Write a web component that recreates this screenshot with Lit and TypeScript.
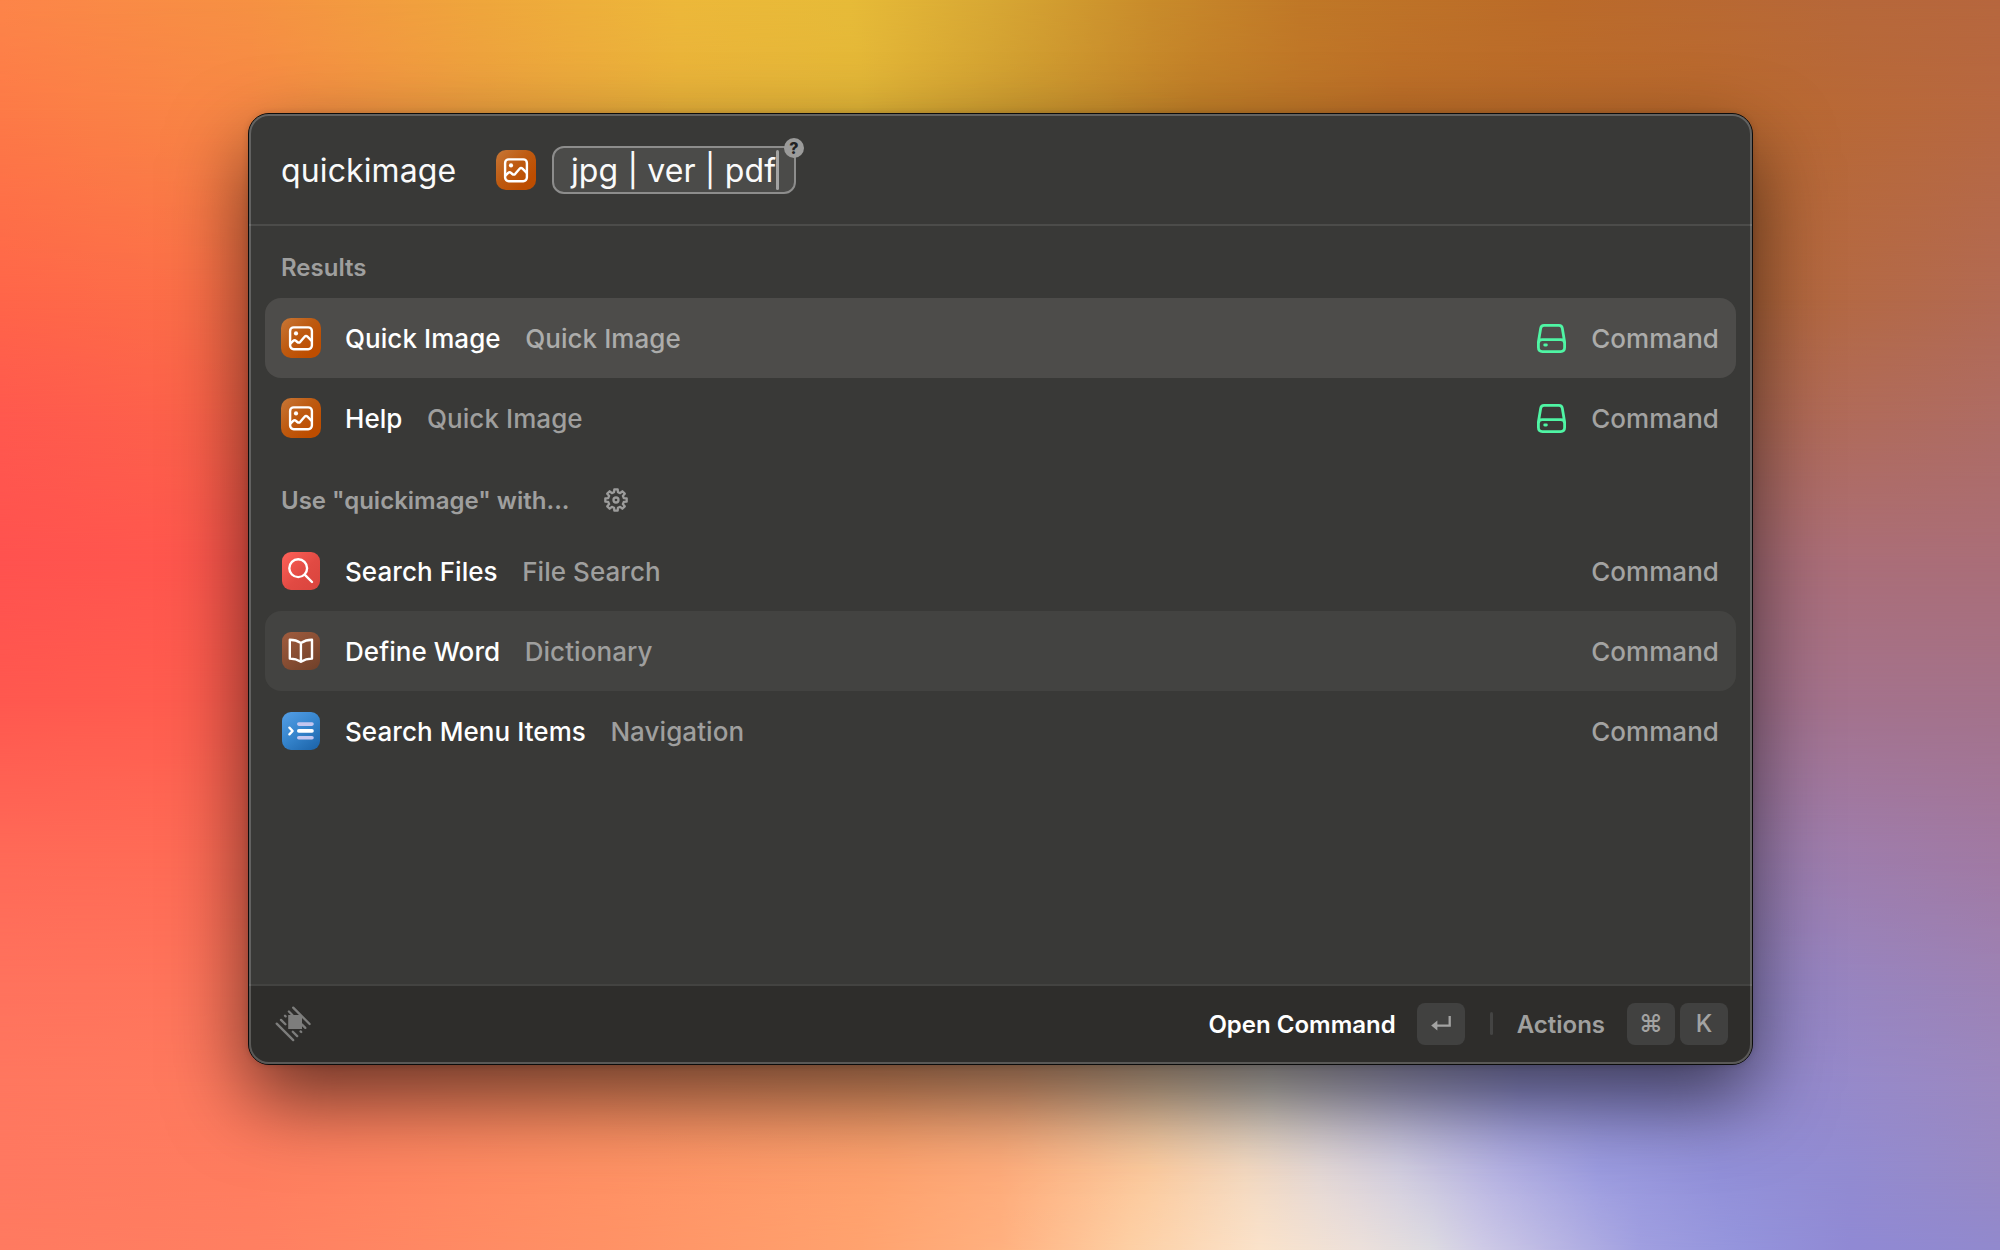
import { LitElement, html, svg, css } from "lit";
import { customElement } from "lit/decorators.js";
import { classMap } from "lit/directives/class-map.js";
import { styleMap } from "lit/directives/style-map.js";

type IconName = "image" | "search" | "book" | "menu";

interface Row {
  icon: IconName;
  title: string;
  subtitle: string;
  local?: boolean;
  state?: "selected" | "hover";
}

const results: Row[] = [
  { icon: "image", title: "Quick Image", subtitle: "Quick Image", local: true, state: "selected" },
  { icon: "image", title: "Help", subtitle: "Quick Image", local: true },
];

const fallbacks: Row[] = [
  { icon: "search", title: "Search Files", subtitle: "File Search" },
  { icon: "book", title: "Define Word", subtitle: "Dictionary", state: "hover" },
  { icon: "menu", title: "Search Menu Items", subtitle: "Navigation" },
];

/* Wallpaper: each band is a horizontal gradient that fades into the next one down. */
const bands: { y: number; stops: [string, number][] }[] = [
  { y: 0, stops: [["#fd8549", 0], ["#f69143", 250], ["#efa63c", 480], ["#edb83a", 680], ["#e7bb38", 850], ["#d8a834", 990], ["#c98c2b", 1150], ["#c07827", 1300], ["#bb6b29", 1550], ["#b7683a", 1850], ["#b7673e", 2000]] },
  { y: 110, stops: [["#fd7a47", 0], ["#f88945", 250], ["#eda03f", 480], ["#e9b23a", 680], ["#e3b638", 860], ["#cf9c30", 1020], ["#c27f28", 1200], ["#bd6e28", 1400], ["#ba692d", 1700], ["#b76841", 2000]] },
  { y: 300, stops: [["#ff6549", 0], ["#fb7148", 250], ["#c08040", 1000], ["#b5683b", 1750], ["#b26a53", 2000]] },
  { y: 420, stops: [["#ff584e", 0], ["#fc6549", 250], ["#b07040", 1000], ["#b26a54", 1750], ["#ae6c64", 2000]] },
  { y: 560, stops: [["#ff524f", 0], ["#ff594d", 250], ["#b07060", 1000], ["#ab6e78", 1750], ["#aa6e78", 2000]] },
  { y: 700, stops: [["#ff584f", 0], ["#ff5f4f", 250], ["#b07060", 1000], ["#a4728d", 1750], ["#a4728a", 2000]] },
  { y: 850, stops: [["#ff6957", 0], ["#ff6c55", 250], ["#c08070", 1000], ["#9d7eb0", 1750], ["#a179a2", 2000]] },
  { y: 980, stops: [["#ff725d", 0], ["#ff755a", 250], ["#f0946a", 800], ["#dcb090", 1080], ["#c6bcc0", 1250], ["#9c99d2", 1450], ["#9486c6", 1750], ["#9d82b4", 2000]] },
  { y: 1090, stops: [["#ff775f", 0], ["#ff7b5e", 250], ["#ff9163", 600], ["#f9a06c", 880], ["#f5ac7e", 1020], ["#e6c5a4", 1160], ["#d2ccc6", 1270], ["#b3b0d6", 1400], ["#9897db", 1520], ["#928fd8", 1640], ["#948ace", 1800], ["#9b88c0", 2000]] },
  { y: 1170, stops: [["#ff7860", 0], ["#ff7d5f", 250], ["#ff9164", 600], ["#fea26e", 880], ["#feac7b", 1000], ["#fccb9f", 1150], ["#f4d9c0", 1245], ["#e4d8d6", 1320], ["#d2cee0", 1400], ["#b5b2e3", 1500], ["#9c9ce0", 1600], ["#9290d9", 1720], ["#928bd1", 1850], ["#9889c4", 2000]] },
  { y: 1250, stops: [["#ff7a60", 0], ["#ff7f61", 250], ["#ff9165", 600], ["#ffa26e", 860], ["#ffb07f", 1000], ["#fdcfa4", 1130], ["#fae2ca", 1260], ["#ece0da", 1360], ["#dddbe1", 1430], ["#cfcbe6", 1480], ["#b8b5e3", 1560], ["#a09fe0", 1640], ["#9494dc", 1740], ["#9089d4", 1850], ["#9189cd", 2000]] },
];

const gearPath = (() => {
  const pts: string[] = [];
  for (let i = 0; i < 8; i++) {
    const at = (r: number, deg: number) => {
      const a = ((i * 45 + deg) * Math.PI) / 180;
      return `${(12 + r * Math.sin(a)).toFixed(2)} ${(12 - r * Math.cos(a)).toFixed(2)}`;
    };
    pts.push(at(8, -14), at(10.8, -9), at(10.8, 9), at(8, 14));
  }
  return `M${pts.join("L")}Z`;
})();

const glyphs = {
  image: svg`<svg viewBox="0 0 40 40" fill="none" stroke="#fff" stroke-width="2.4" stroke-linecap="round" stroke-linejoin="round">
    <rect x="9.1" y="9.4" width="21.8" height="21.8" rx="3.6"/>
    <circle cx="15" cy="15.4" r="2.1" fill="#fff" stroke="none"/>
    <path d="M9.4 25.6L12.2 22.8Q13.6 21.5 15 22.8L16.3 24Q17.8 25.3 19.3 23.8L23.6 18.8Q25 17.3 26.5 18.7L30.7 22.8"/></svg>`,
  search: svg`<svg viewBox="0 0 38 38" fill="none" stroke="#fff" stroke-width="2.4" stroke-linecap="round">
    <circle cx="16.2" cy="16.2" r="8.9"/><path d="M22.7 22.7L30 30"/></svg>`,
  book: svg`<svg viewBox="0 0 38 38" fill="none" stroke="#fff" stroke-width="2.4" stroke-linejoin="round" stroke-linecap="round">
    <path d="M18.9 11Q14 7.8 7.8 7.8V26.6Q14 26.6 18.9 29.8Q23.8 26.6 30 26.6V7.8Q23.8 7.8 18.9 11ZM18.9 11V29.6"/></svg>`,
  menu: svg`<svg viewBox="0 0 38 38" fill="none" stroke-width="3.6" stroke-linecap="round" stroke-linejoin="round">
    <path d="M7.4 15.7L10.6 19L7.4 22.3" stroke="#fff" stroke-width="2.4"/>
    <path d="M16.8 12.1H30M16.8 25.7H30" stroke="#c3c6ef"/><path d="M16.8 18.9H30" stroke="#fff"/></svg>`,
};

const drive = html`<svg class="drive" viewBox="0 0 29 29" fill="none" stroke="#4ff5a4" stroke-width="2.8" stroke-linecap="round" stroke-linejoin="round">
  <path d="M1.4 19.5V18L3.7 4.2Q4.2 1.4 7 1.4H22Q24.8 1.4 25.3 4.2L27.6 18V23.6Q27.6 27.6 23.6 27.6H5.4Q1.4 27.6 1.4 23.6V19.5Q1.4 15.7 5.2 15.7H23.8Q27.6 15.7 27.6 19.5"/>
  <path d="M7.7 21H9.4"/></svg>`;

const gear = html`<svg class="gear" viewBox="0 0 24 24" fill="none" stroke="#9c9c9b" stroke-width="2.3" stroke-linejoin="round">
  <path d=${gearPath}></path><circle cx="12" cy="12" r="2.5"/></svg>`;

const logo = html`<svg class="logo" viewBox="0 0 36 36" fill="none" stroke="#7d7d7c" stroke-width="2.3" stroke-linecap="round">
  <rect x="13.2" y="9" width="13.8" height="14" fill="#7d7d7c" stroke="none"/>
  <path d="M18.2 1.6L34.6 18M1.7 17.6L18.2 34.1M13.9 5.5L17.4 9M26.8 18.4L30.3 21.9M10 9.8L10.6 10.4M25.6 25.4L26.2 26M6 13.9L10.4 18.3M17.8 25.7L22.2 30.1"/></svg>`;

const enter = html`<svg class="enter" viewBox="0 0 20 16" fill="none" stroke="#a3a3a2" stroke-width="2.3">
  <path d="M18.7 0V9.6H3"/><path d="M6.4 4.6V14.6L.2 9.6Z" fill="#a3a3a2" stroke="none"/></svg>`;

@customElement("app-root")
export class AppRoot extends LitElement {
  static styles = css`
    :host {
      display: block;
      width: 2000px;
      height: 1250px;
      font-family: Inter, "Liberation Sans", sans-serif;
    }
    * { box-sizing: border-box; }
    svg { display: block; flex: none; }
    .stage {
      position: relative;
      width: 2000px;
      height: 1250px;
      overflow: hidden;
      padding: 113px 247px 185px 248px;
      display: flex;
    }
    .band { position: absolute; inset: 0; }
    .window {
      position: relative;
      flex: 1;
      display: flex;
      flex-direction: column;
      border: 1px solid #0c0c0c;
      border-radius: 21px;
      background: #393937;
      box-shadow: 0 0 6px rgba(0, 0, 0, .15), 0 34px 80px rgba(0, 0, 0, .6);
    }
    .window::after {
      content: "";
      position: absolute;
      inset: 0;
      border: 2px solid rgba(255, 255, 255, .21);
      border-radius: 20px;
      pointer-events: none;
    }
    .search {
      height: 112px;
      display: flex;
      align-items: center;
      padding: 1px 32px 0;
      border-bottom: 2px solid #4c4c4a;
      font-size: 32px;
      letter-spacing: .12px;
      color: #fafafa;
    }
    .query { width: 215px; padding-top: 1px; }
    .args {
      position: relative;
      display: flex;
      align-items: center;
      width: 244px;
      height: 48px;
      margin-left: 16px;
      padding-left: 17px;
      border: 2px solid #8d8d8c;
      border-radius: 12px;
      background: #4b4b49;
      white-space: pre;
    }
    .value { padding-top: 1px; }
    .caret { width: 3px; height: 40px; background: #a3a3a2; border-radius: 2px; }
    .badge {
      position: absolute;
      right: -10px;
      top: -10px;
      width: 20px;
      height: 20px;
      border-radius: 50%;
      background: #9b9b9a;
      color: #222;
      font-size: 16px;
      font-weight: 800;
      line-height: 20px;
      text-align: center;
    }
    .tile { flex: none; width: 40px; height: 40px; border-radius: 10px; }
    .tile.search-tile, .tile.book, .tile.menu { width: 38px; height: 38px; margin: 0 1px; border-radius: 9px; }
    .tile.image { background: linear-gradient(135deg, #c67433 5%, #be5a10 45%, #bd4d00 80%); }
    .tile.search-tile { background: linear-gradient(135deg, #ff6259, #e14a43 55%, #d9443d); }
    .tile.book { background: linear-gradient(145deg, #a05c3e, #6f4029); }
    .tile.menu { background: linear-gradient(145deg, #559fe6, #3584cc 50%, #1a61a6); }
    .list { flex: 1; padding: 0 16px; }
    .heading {
      display: flex;
      align-items: center;
      height: 72px;
      padding: 11px 16px 0;
      gap: 35px;
      font-size: 24px;
      font-weight: 600;
      color: #9f9f9e;
    }
    .heading.second { height: 73px; }
    .row {
      display: flex;
      align-items: center;
      height: 80px;
      padding: 0 17px 0 16px;
      border-radius: 16px;
      font-size: 26px;
      font-weight: 500;
      letter-spacing: .06px;
      color: #fff;
    }
    .row.selected { background: #4d4c4a; }
    .row.hover { background: #434341; }
    .title { margin-left: 24px; }
    .subtitle { margin-left: 24.5px; flex: 1; color: #9f9f9e; }
    .kind { color: #a3a3a2; margin-left: 25px; }
    .selected .subtitle, .selected .kind { color: #acacab; }
    .drive { width: 29px; height: 29px; }
    .gear { width: 24px; height: 24px; }
    .footer {
      height: 80px;
      display: flex;
      align-items: center;
      padding: 0 24px 3px 26px;
      border-top: 2px solid #434341;
      border-radius: 0 0 20px 20px;
      background: #2e2d2b;
      font-size: 24px;
      font-weight: 600;
      color: #fff;
    }
    .logo { width: 36px; height: 36px; margin-right: auto; }
    .key {
      display: flex;
      align-items: center;
      justify-content: center;
      width: 48px;
      height: 42px;
      border-radius: 8px;
      background: #414140;
      color: #a3a3a2;
      font-weight: 500;
    }
    .enter { width: 20px; height: 16px; }
    .open, .actions { padding-top: 1px; }
    .open + .key { margin-left: 21px; }
    .sep { width: 3px; height: 23px; margin: 0 24px 0 25px; background: #444443; border-radius: 2px; }
    .actions { color: #a0a09f; margin-right: 22px; }
    .key.k { margin-left: 5px; }
  `;

  private tile(name: IconName) {
    const cls = { tile: true, image: name === "image", "search-tile": name === "search", book: name === "book", menu: name === "menu" };
    return html`<span class=${classMap(cls)}>${glyphs[name]}</span>`;
  }

  private row(r: Row) {
    return html`<div class=${classMap({ row: true, selected: r.state === "selected", hover: r.state === "hover" })}>
      ${this.tile(r.icon)}
      <span class="title">${r.title}</span>
      <span class="subtitle">${r.subtitle}</span>
      ${r.local ? drive : null}
      <span class="kind">Command</span>
    </div>`;
  }

  private band(i: number) {
    const b = bands[i];
    const fill = `linear-gradient(90deg, ${b.stops.map(([c, x]) => `${c} ${x}px`).join(", ")})`;
    const mask = i ? `linear-gradient(180deg, transparent ${bands[i - 1].y}px, #000 ${b.y}px)` : "none";
    return html`<div class="band" style=${styleMap({ background: fill, maskImage: mask })}></div>`;
  }

  render() {
    return html`<div class="stage">
      ${bands.map((_, i) => this.band(i))}
      <main class="window">
        <div class="search">
          <span class="query">quickimage</span>
          ${this.tile("image")}
          <div class="args"><span class="value">jpg | ver | pdf</span><i class="caret"></i><b class="badge">?</b></div>
        </div>
        <div class="list">
          <div class="heading">Results</div>
          ${results.map((r) => this.row(r))}
          <div class="heading second"><span>Use "quickimage" with...</span>${gear}</div>
          ${fallbacks.map((r) => this.row(r))}
        </div>
        <div class="footer">
          ${logo}
          <span class="open">Open Command</span>
          <span class="key">${enter}</span>
          <i class="sep"></i>
          <span class="actions">Actions</span>
          <span class="key">⌘</span>
          <span class="key k">K</span>
        </div>
      </main>
    </div>`;
  }
}
